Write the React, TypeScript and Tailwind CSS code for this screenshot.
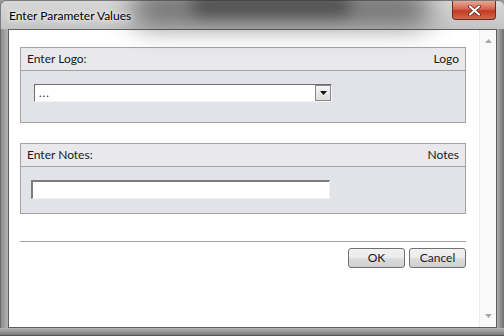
import { useState } from 'react'

const font = { fontFamily: 'Lato, "Noto Sans", "Liberation Sans", sans-serif' }

function Panel({ label, tag, children }: { label: string; tag: string; children: React.ReactNode }) {
  return (
    <div className="border border-[#a3a3a3]">
      <div className="h-[23px] flex items-center justify-between px-[6px] bg-[#e9e9ec] border-b border-[#a3a3a3] text-[12px] text-[#1a1a1a]">
        <span>{label}</span>
        <span>{tag}</span>
      </div>
      <div className="bg-[#e2e3e8]">{children}</div>
    </div>
  )
}

function Arrow({ up }: { up?: boolean }) {
  return (
    <svg width="7" height="4" viewBox="0 0 7 4" className="block">
      <path d={up ? 'M0 4 L3.5 0 L7 4 Z' : 'M0 0 L7 0 L3.5 4 Z'} fill="#a8a8a8" />
    </svg>
  )
}

export default function App() {
  const [notes, setNotes] = useState('')

  return (
    <div
      className="w-[504px] h-[336px] flex flex-col overflow-hidden bg-[#9c9c9c] select-none"
      style={font}
    >
      {/* Title bar */}
      <div className="relative h-[29px] shrink-0 bg-[linear-gradient(180deg,#d8d8d8,#c4c4c4)] rounded-t-[6px] border-t border-l border-[#7a7a7a]">
        <div className="absolute left-[130px] top-[-10px] w-[300px] h-[34px] rounded-full bg-[#3c3c3c] opacity-70 blur-[14px]" />
        <div className="absolute left-[190px] top-[-6px] w-[160px] h-[20px] rounded-full bg-[#2a2a2a] opacity-60 blur-[8px]" />
        <span className="absolute left-[8px] top-[6px] text-[12px] text-black [text-shadow:0_0_8px_#fff,0_0_4px_#fff]">
          Enter Parameter Values
        </span>
        <div className="absolute right-[8px] top-0 w-[44px] h-[19px] rounded-b-[4px] border border-t-0 border-[#6b2a22] bg-[linear-gradient(180deg,#e9a795_0%,#d4654e_45%,#c23a22_55%,#d06a4c_100%)] flex items-center justify-center">
          <svg width="13" height="11" viewBox="0 0 13 11">
            <path d="M2 1.5 L11 9.5 M11 1.5 L2 9.5" stroke="#5a1a10" strokeWidth="3.6" strokeLinecap="round" />
            <path d="M2 1.5 L11 9.5 M11 1.5 L2 9.5" stroke="#fff" strokeWidth="2.2" strokeLinecap="round" />
          </svg>
        </div>
      </div>

      <div className="flex flex-1 min-h-0">
        {/* left frame */}
        <div className="w-[8px] shrink-0 bg-[linear-gradient(90deg,#8e8e8e,#b4b4b4)] border-l border-[#6a6a6a]" />

        {/* client */}
        <div className="flex flex-1 min-w-0 border border-[#5f5f5f] bg-white">
          <div className="flex-1 min-w-0 pl-[11px] pr-[13px] pt-[17px] text-[12px] text-[#1a1a1a]">
            <Panel label="Enter Logo:" tag="Logo">
              <div className="pl-[13px] pt-[13px] pb-[20px]">
                <div className="w-[298px] h-[18px] flex border-t border-l border-[#6f6f6f] border-b border-r border-b-[#f4f4f4] border-r-[#f4f4f4] bg-white">
                  <div className="flex-1 pl-[4px] leading-[16px] text-[11px] tracking-[1px]">...</div>
                  <div className="w-[16px] h-full flex items-center justify-center border border-[#8a8a8a] bg-[linear-gradient(180deg,#f7f7f7,#dcdcdc)]">
                    <svg width="7" height="4" viewBox="0 0 7 4">
                      <path d="M0 0 L7 0 L3.5 4 Z" fill="#111" />
                    </svg>
                  </div>
                </div>
              </div>
            </Panel>

            <div className="h-[20px]" />

            <Panel label="Enter Notes:" tag="Notes">
              <div className="pl-[10px] pt-[13px] pb-[14px]">
                <input
                  value={notes}
                  onChange={(e) => setNotes(e.target.value)}
                  className="block w-[299px] h-[19px] bg-white outline-none border-t-2 border-l-2 border-[#7c7c7c] border-b border-r border-b-[#f2f2f2] border-r-[#f2f2f2] text-[12px] px-[2px]"
                />
              </div>
            </Panel>

            <div className="mt-[27px] border-t border-[#a0a0a0]" />

            <div className="flex justify-end gap-[4px] mt-[6px]">
              <button className="w-[57px] h-[20px] rounded-[3px] border border-[#707070] bg-[linear-gradient(180deg,#f2f2f2_0%,#ebebeb_48%,#dddddd_52%,#cfcfcf_100%)] text-[12px] text-[#1a1a1a] leading-none">
                OK
              </button>
              <button className="w-[57px] h-[20px] rounded-[3px] border border-[#707070] bg-[linear-gradient(180deg,#f2f2f2_0%,#ebebeb_48%,#dddddd_52%,#cfcfcf_100%)] text-[12px] text-[#1a1a1a] leading-none">
                Cancel
              </button>
            </div>
          </div>

          {/* scrollbar */}
          <div className="w-[17px] shrink-0 flex flex-col items-center justify-between py-[9px] bg-[#f9f9f9] border-l border-[#ececec]">
            <Arrow up />
            <Arrow />
          </div>
        </div>

        {/* right frame */}
        <div className="w-[7px] shrink-0 bg-[linear-gradient(90deg,#b0b0b0,#6f6f6f)]" />
      </div>

      {/* bottom frame */}
      <div className="h-[8px] shrink-0 bg-[linear-gradient(180deg,#b6b6b6,#7a7a7a)] border-b border-[#555]" />
    </div>
  )
}
